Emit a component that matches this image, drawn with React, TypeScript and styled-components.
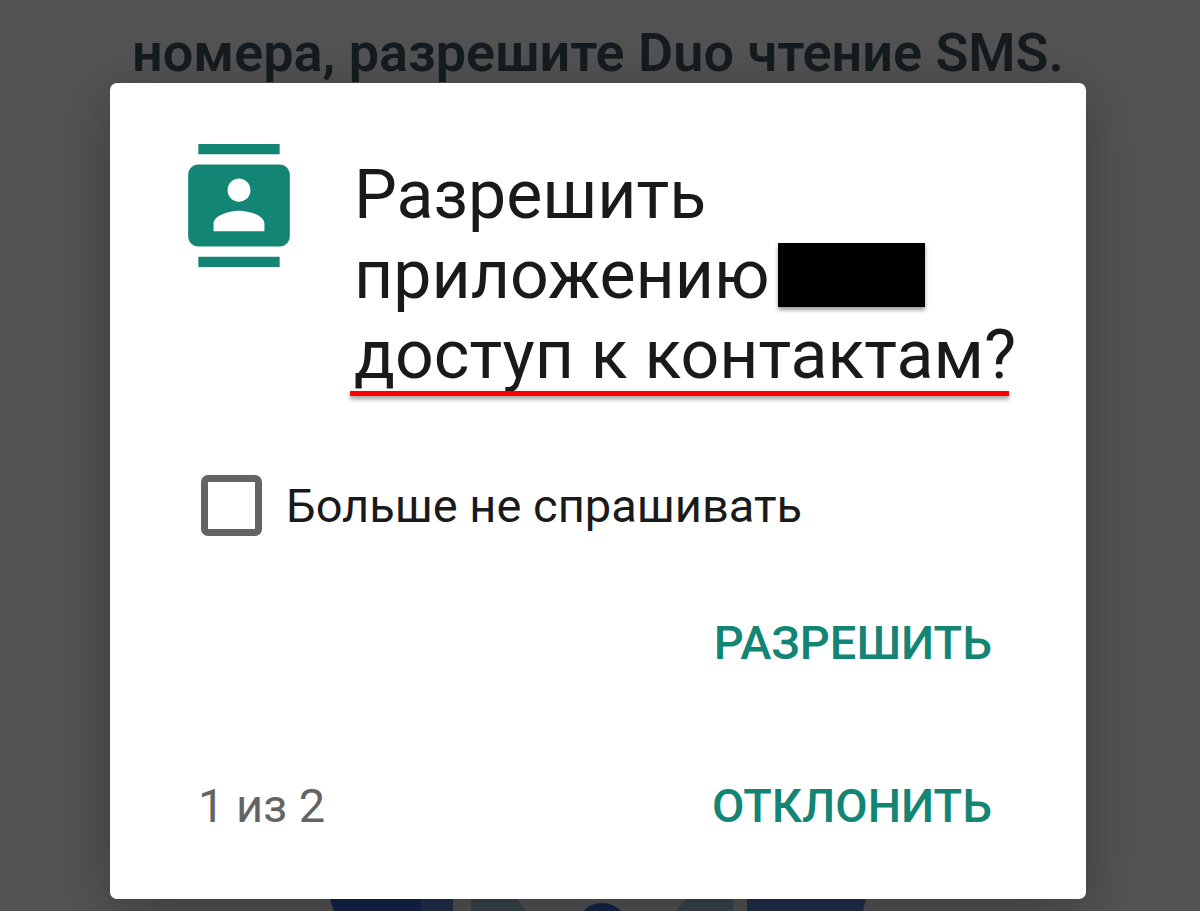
import React from "react";
import styled, { createGlobalStyle } from "styled-components";

const GlobalStyle = createGlobalStyle`
  *, *::before, *::after {
    box-sizing: border-box;
  }
  body {
    margin: 0;
    background: #525352;
    font-family: Roboto, "Liberation Sans", sans-serif;
  }
`;

const Screen = styled.div`
  position: relative;
  min-height: 100vh;
  overflow: hidden;
`;

const Backdrop = styled.div`
  position: absolute;
  inset: 0;
  display: flex;
  flex-direction: column;
  align-items: center;
  justify-content: space-between;
  padding: 21px 4px 0 0;
`;

const PageHeading = styled.p`
  margin: 0;
  font-size: 54px;
  line-height: 64px;
  font-weight: 600;
  color: #151c20;
  text-align: center;
  white-space: nowrap;
`;

const Illustration = styled.svg`
  display: block;
  flex: none;
`;

const Overlay = styled.div`
  position: relative;
  padding: 83px 114px 12px 110px;
`;

const Dialog = styled.section`
  padding: 61px 64px 45px 68px;
  border-radius: 7px;
  background: #fff;
  box-shadow: 0 12px 56px rgba(0, 0, 0, 0.28);
`;

const Header = styled.header`
  display: flex;
  align-items: flex-start;
  gap: 54px;
`;

const ContactsGlyph = styled.svg`
  flex: none;
  width: 122px;
  height: 123px;
  fill: #128575;
`;

const Title = styled.h1`
  margin: 0;
  padding-top: 11px;
  font-size: 68px;
  line-height: 80px;
  font-weight: 400;
  color: #1a1a1a;
`;

const TitleLine = styled.span`
  display: flex;
  align-items: center;
  gap: 8px;
`;

const Redaction = styled.span`
  width: 147px;
  height: 64px;
  background: #000;
  box-shadow: 0 3px 4px rgba(0, 0, 0, 0.4);
`;

const Underlined = styled.span`
  position: relative;
  white-space: nowrap;

  &::after {
    content: "";
    position: absolute;
    left: -4px;
    right: 7px;
    bottom: -1px;
    height: 5px;
    background: #fe0000;
    box-shadow: 0 3px 4px rgba(0, 0, 0, 0.4);
  }
`;

const Option = styled.label`
  display: flex;
  align-items: center;
  gap: 24px;
  margin: 80px 0 59px;
  padding-left: 23px;
  font-size: 47px;
  line-height: 61px;
  color: #1a1a1a;
`;

const Checkbox = styled.input`
  appearance: none;
  flex: none;
  width: 61px;
  height: 61px;
  margin: 0;
  border: 7px solid #646464;
  border-radius: 7px;
  background: #fff;

  &:checked {
    background: #128575;
  }
`;

const Footer = styled.footer`
  display: grid;
  grid-template-columns: 1fr auto;
  row-gap: 67px;
  align-items: center;
  padding: 0 30px 0 20px;
`;

const Action = styled.button`
  grid-column: 2;
  justify-self: end;
  height: 96px;
  padding: 0;
  border: 0;
  background: none;
  font: 500 47px/56px Roboto, "Liberation Sans", sans-serif;
  color: #128575;
  cursor: pointer;
`;

const Progress = styled.span`
  grid-row: 2;
  font-size: 47px;
  line-height: 56px;
  color: #646464;
`;

const ContactsIcon = () => (
  <ContactsGlyph viewBox="0 0 24 24" preserveAspectRatio="none" aria-hidden="true">
    <path d="M20 0H4v2h16V0zM4 24h16v-2H4v2zM20 4H4c-1.1 0-2 .9-2 2v12c0 1.1.9 2 2 2h16c1.1 0 2-.9 2-2V6c0-1.1-.9-2-2-2zm-8 2.75c1.24 0 2.25 1.01 2.25 2.25s-1.01 2.25-2.25 2.25S9.75 10.24 9.75 9 10.76 6.75 12 6.75zM17 17H7v-1.5c0-1.67 3.33-2.5 5-2.5s5 .83 5 2.5V17z" />
  </ContactsGlyph>
);

const PageArt = () => (
  <Illustration width="542" height="24" viewBox="0 0 542 24" aria-hidden="true">
    <path d="M-2 0h96v24H7C5 18 3 11-2 0z" fill="#13244a" />
    <path d="M94 0h32v24H94z" fill="#222f4e" />
    <path d="M144 0h36l19 24h-55z" fill="#37444c" />
    <path d="M369 0h37v24h-57z" fill="#37444c" />
    <path d="M420 0h122l-6 24H420z" fill="#222f4e" />
    <circle cx="275" cy="43" r="27" fill="#13244a" />
  </Illustration>
);

export default function App() {
  return (
    <Screen>
      <GlobalStyle />
      <Backdrop>
        <PageHeading>номера, разрешите Duo чтение SMS.</PageHeading>
        <PageArt />
      </Backdrop>
      <Overlay>
        <Dialog role="dialog" aria-labelledby="permission-title">
          <Header>
            <ContactsIcon />
            <Title id="permission-title">
              <TitleLine>Разрешить</TitleLine>
              <TitleLine>
                приложению
                <Redaction />
              </TitleLine>
              <Underlined>доступ к контактам?</Underlined>
            </Title>
          </Header>
          <Option>
            <Checkbox type="checkbox" />
            Больше не спрашивать
          </Option>
          <Footer>
            <Action type="button">РАЗРЕШИТЬ</Action>
            <Progress>1 из 2</Progress>
            <Action type="button">ОТКЛОНИТЬ</Action>
          </Footer>
        </Dialog>
      </Overlay>
    </Screen>
  );
}
